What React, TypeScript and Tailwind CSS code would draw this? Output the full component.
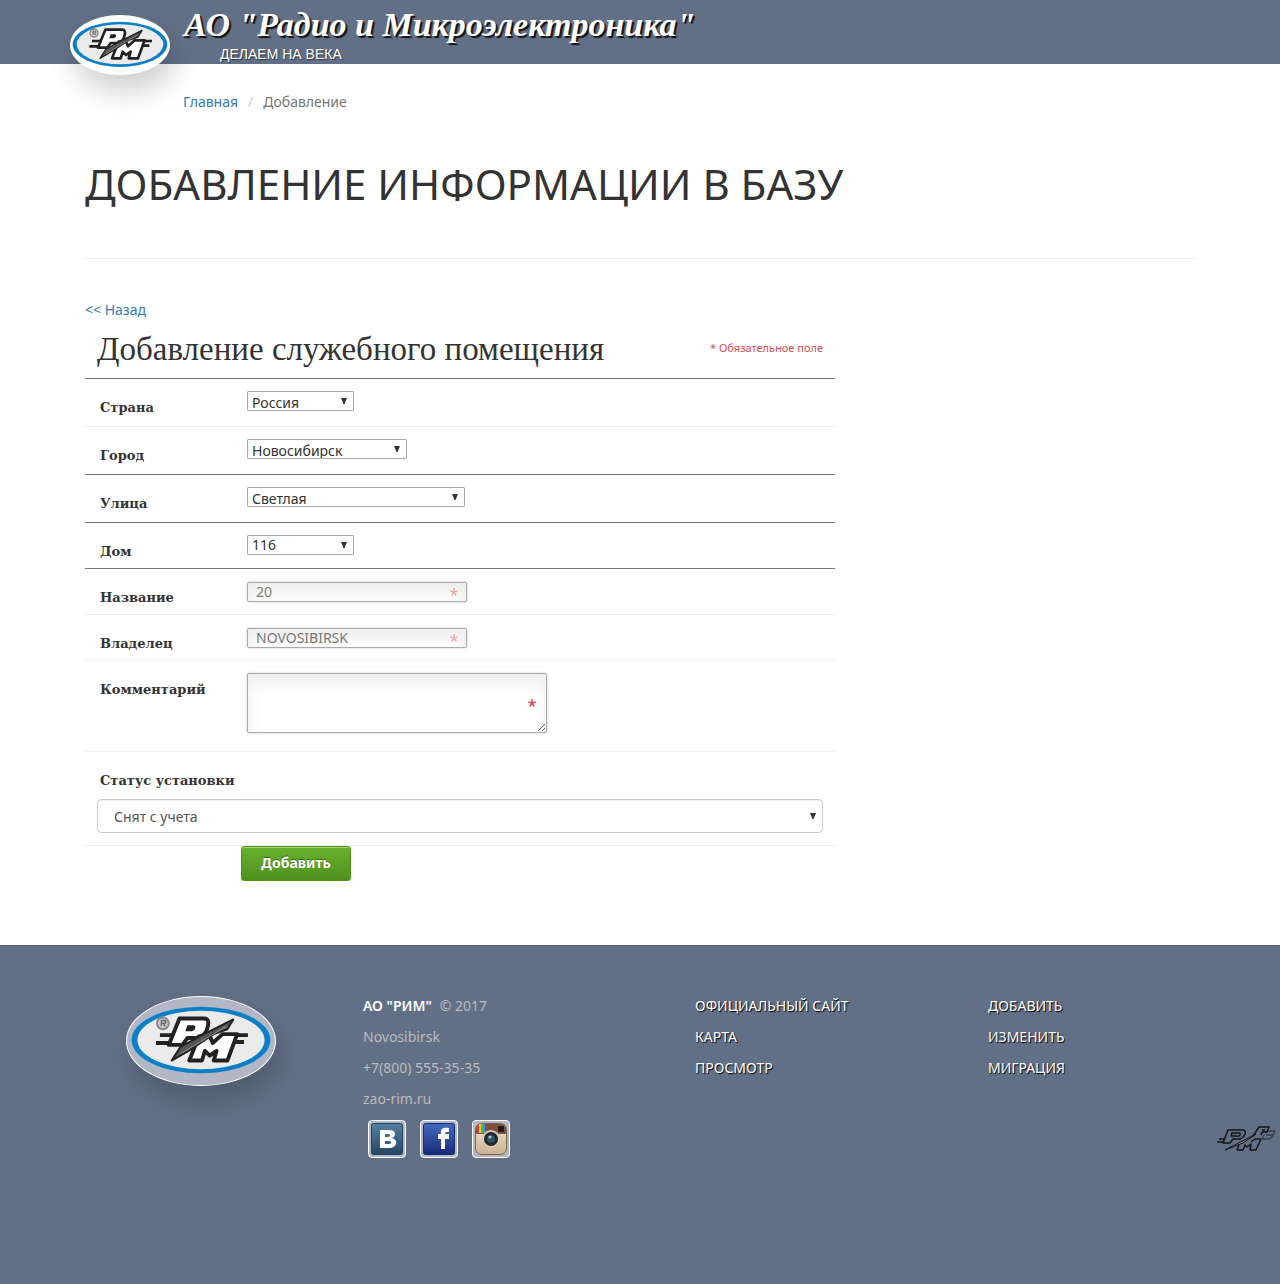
import type { ReactNode } from 'react';

const Emblem = ({ className }: { className: string }) => (
  <svg viewBox="0 0 150 90" className={className} role="img" aria-label="РиМ">
    <ellipse cx="75" cy="44" rx="71" ry="34" fill="#0d7fc6" />
    <ellipse cx="75" cy="44" rx="65" ry="30" fill="#ebebeb" />
    <circle cx="36" cy="27" r="6" fill="#ccc" stroke="#888" strokeWidth="2" />
    <path d="M34.500 30v-6h2q2.500 0 2.500 1.500T36.500 27h-2m2 0l2 3" stroke="#666" strokeWidth="1.4" fill="none" />
    <g strokeLinejoin="round">
      <path d="M33 39h12M29 47h14M108 39h15M106 46h13" stroke="#222" strokeWidth="4" fill="none" />
      <path d="M53 22H78Q84 22 82 30Q80 41 70 42H61L56 49H42Z" fill="#fff" stroke="#222" strokeWidth="4" />
      <path d="M61 29h6q3 0 2 3q-1 3-4 3h-6Z" fill="#222" />
      <path d="M73 40H84L87 47L97 38H112L102 65H88L91 55L84 60L79 55L76 65H63Z" fill="#fff" stroke="#222" strokeWidth="4" />
      <path d="M108 23L102 33L88 38L64 54L45 65L54 51L78 38Z" fill="#555" stroke="#222" strokeWidth="2" />
      <path d="M101 30L54 58" stroke="#999" strokeWidth="1" />
    </g>
  </svg>
);

const CornerMark = () => (
  <svg viewBox="0 0 60 28" className="h-7 w-[60px]" role="img" aria-label="РиМ">
    <g fill="none" stroke="#151515" strokeWidth="1.5" strokeLinejoin="round">
      <path d="M3 14H8M1 17H7M12 5H27Q30 5 29 9Q27 14 22 14H17L14 18H7Z" />
      <path d="M16 8h7q2 0 1 2t-4 1h-5Z" />
      <path d="M24 17L21 25H27L29 20L31 22L35 19L34 25H40L45 14H39L35 17" />
      <path d="M37 11L43 2H53L51 7H46L45 10M46 5h3" />
      <path d="M52 6H59L57 10H50M50 10H57L54 14H46L48 10" stroke="#3a3f48" />
      <path d="M9 25L40 9L27 18Z" fill="#888" strokeWidth="1" />
    </g>
  </svg>
);

const Arrow = ({ className }: { className: string }) => (
  <svg viewBox="0 0 6 6" className={`pointer-events-none absolute size-1.5 ${className}`} aria-hidden="true">
    <path d="M0 0H6L3.500 6H2.500Z" fill="#333" />
  </svg>
);

const Star = ({ className }: { className: string }) => (
  <svg viewBox="0 0 8 8" className={`pointer-events-none absolute size-2 ${className}`} aria-hidden="true">
    <path d="M4 0V4M4 4L0.300 3M4 4L7.700 3M4 4L1.800 7.500M4 4L6.200 7.500" stroke="#e0474c" strokeWidth="1.500" />
  </svg>
);

type RowProps = { id: string; label: string; height: string; line: string; children: ReactNode };
const Row = ({ id, label, height, line, children }: RowProps) => (
  <div className={`flex items-start border-b pt-3 ${height} ${line}`}>
    <label htmlFor={id} className="w-[162px] shrink-0 pt-[7px] pl-[15px] font-['DejaVu_Serif',serif] text-[13px] leading-5 font-bold">
      {label}
    </label>
    {children}
  </div>
);

const DARK = 'border-[#777]';
const LIGHT = 'border-[#eee]';

type PickProps = { id: string; value: string; width: string; pad: string };
const Pick = ({ id, value, width, pad }: PickProps) => (
  <div className={`relative ${width}`}>
    <select id={id} className={`block h-5 w-full appearance-none overflow-hidden rounded-[1px] border border-[#a9a9a9] bg-white pl-1 text-sm leading-[18px] ${pad}`}>
      <option>{value}</option>
    </select>
    <Arrow className="top-[7px] right-[7px]" />
  </div>
);

const Locked = ({ id, value }: { id: string; value: string }) => (
  <div className="relative mt-px w-[220px]">
    <input
      id={id}
      disabled
      defaultValue={value}
      className="block h-5 w-full rounded-[2px] border border-[#aaa] bg-white px-2 pb-0.5 text-sm leading-4 text-[#777] shadow-[0_0_3px_#ccc,inset_0_10px_15px_#eee]"
    />
    <Star className="top-1.5 right-[9px] opacity-40" />
  </div>
);

const picks = [
  { id: 'country', label: 'Страна', value: 'Россия', width: 'w-[107px]', pad: 'pt-0.5', height: 'h-12', line: LIGHT },
  { id: 'city', label: 'Город', value: 'Новосибирск', width: 'w-40', pad: 'pt-0.5', height: 'h-12', line: DARK },
  { id: 'street', label: 'Улица', value: 'Светлая', width: 'w-[218px]', pad: 'pt-0.5', height: 'h-12', line: DARK },
  { id: 'house', label: 'Дом', value: '116', width: 'w-[107px]', pad: 'pt-0', height: 'h-[46px]', line: DARK },
];

const Social = ({ label, children }: { label: string; children: ReactNode }) => (
  <a href="#" aria-label={label} className="block size-[38px] rounded border border-white bg-[#b1b7c5] p-0.5">
    <svg viewBox="0 0 32 32" className="size-8" aria-hidden="true">{children}</svg>
  </a>
);

const links = 'text-white [text-shadow:1px_1px_1px_#000]';

export default function App() {
  return (
    <div className="flex min-h-screen flex-col bg-white font-['Noto_Sans',sans-serif] text-sm text-[#333]">
      <header className="h-16 bg-[#627087]">
        <div className="mx-auto flex max-w-[1140px] items-start">
          <a href="#" className="relative mt-[15px] block shrink-0 rounded-[50%] bg-white shadow-[5px_15px_30px_rgba(0,0,0,0.2)]">
            <Emblem className="h-[60px] w-[100px]" />
          </a>
          <div className="pl-3.5 text-white">
            <div className="pt-1 font-['Liberation_Serif',serif] text-[34px] leading-[42px] font-bold whitespace-nowrap italic [text-shadow:2px_2px_1px_#111]">
              АО "Радио и Микроэлектроника"
            </div>
            <div className="pl-9 font-['Liberation_Sans',sans-serif] text-sm leading-4 [text-shadow:1px_1px_1px_#333]">ДЕЛАЕМ НА ВЕКА</div>
          </div>
        </div>
      </header>

      <main className="mx-auto w-full max-w-[1140px] grow px-[15px]">
        <nav className="flex gap-2.5 pt-7 pl-[98px] leading-5">
          <a href="#" className="text-[#337ab7]">Главная</a>
          <span className="text-[#ccc]">/</span>
          <span className="text-[#777]">Добавление</span>
        </nav>
        <h1 className="mt-10 text-[42px] leading-[64px] whitespace-nowrap">ДОБАВЛЕНИЕ ИНФОРМАЦИИ В БАЗУ</h1>
        <hr className="mt-[42px] border-[#eee]" />
        <a href="#" className="mt-[41px] block w-fit leading-5 text-[#337ab7]">&lt;&lt; Назад</a>

        <form className="max-w-[750px]" onSubmit={(e) => e.preventDefault()}>
          <div className="flex h-[59px] items-center justify-between border-b border-[#777] px-3">
            <h2 className="font-['Liberation_Serif',serif] text-[33px] leading-10 whitespace-nowrap">Добавление служебного помещения</h2>
            <span className="pb-0.5 text-[11px] leading-4 text-[#d45252]">* Обязательное поле</span>
          </div>
          {picks.map((p) => (
            <Row key={p.id} id={p.id} label={p.label} height={p.height} line={p.line}>
              <Pick id={p.id} value={p.value} width={p.width} pad={p.pad} />
            </Row>
          ))}
          <Row id="name" label="Название" height="h-[46px]" line={LIGHT}>
            <Locked id="name" value="20" />
          </Row>
          <Row id="owner" label="Владелец" height="h-[46px]" line={LIGHT}>
            <Locked id="owner" value="NOVOSIBIRSK" />
          </Row>
          <Row id="comment" label="Комментарий" height="h-[91px]" line={LIGHT}>
            <div className="relative">
              <textarea
                id="comment"
                className="block h-[60px] w-[300px] rounded-[2px] border border-[#aaa] bg-white px-2 shadow-[0_0_3px_#ccc,inset_0_10px_15px_#eee]"
              />
              <Star className="top-[26px] right-[11px]" />
            </div>
          </Row>
          <div className="h-[94px] border-b border-[#eee] px-3 pt-[19px]">
            <label htmlFor="status" className="block pl-[3px] font-['DejaVu_Serif',serif] text-[13px] leading-5 font-bold">Статус установки</label>
            <div className="relative mt-2">
              <select id="status" className="block h-[34px] w-full appearance-none rounded border border-[#ccc] bg-white px-4 pt-px text-sm text-[#555] shadow-[inset_0_1px_1px_rgba(0,0,0,0.075)]">
                <option>Снят с учета</option>
              </select>
              <Arrow className="top-3.5 right-[7px]" />
            </div>
          </div>
          <button
            type="submit"
            className="ml-39 block h-[35px] w-[110px] rounded-[3px] border border-[#509111] bg-linear-to-b from-[#68b12f] to-[#50911e] pb-0.5 text-sm font-bold text-white shadow-[inset_0_1px_0_#9fd574] [text-shadow:0_-1px_0_#396715]"
          >
            Добавить
          </button>
        </form>
      </main>

      <footer className="relative mt-16 h-[339px] border-t border-[#536078] bg-[#627087] text-[#bbb]">
        <div className="mx-auto grid max-w-[1140px] grid-cols-[278fr_332fr_293fr_207fr] px-[15px] pt-11 leading-[31px]">
          <a href="#" className="mt-1.5 ml-[41px] block h-[90px] w-[150px] overflow-hidden rounded-[50%] border border-white bg-[#b1b7c5] shadow-[5px_15px_30px_rgba(0,0,0,0.2)]">
            <Emblem className="h-[88px] w-[148px]" />
          </a>
          <div>
            <p><a href="#" className="mr-2 font-semibold text-white">АО "РИМ"</a>© 2017</p>
            <p>Novosibirsk</p>
            <p>+7(800) 555-35-35</p>
            <p>zao-rim.ru</p>
            <div className="mt-1.5 flex gap-3.5 pl-[5px]">
              <Social label="ВКонтакте">
                <defs>
                  <linearGradient id="vk" x2="0" y2="1"><stop stopColor="#55809f" /><stop offset="1" stopColor="#244563" /></linearGradient>
                  <linearGradient id="fb" x2="0" y2="1"><stop stopColor="#4569bd" /><stop offset="1" stopColor="#182a76" /></linearGradient>
                  <linearGradient id="ig" x2="0" y2="1"><stop stopColor="#f3e6d2" /><stop offset="1" stopColor="#cbb091" /></linearGradient>
                </defs>
                <rect x=".5" y=".5" width="31" height="31" rx="2" fill="url(#vk)" stroke="#234460" />
                <path fillRule="evenodd" d="M9 7H18C26 7 25 14 21 15C28 17 26 25 18 25H9ZM14 11V14H17C20 14 20 11 17 11ZM14 18V21H18C21 21 21 18 18 18Z" fill="#fff" />
              </Social>
              <Social label="Facebook">
                <rect x=".5" y=".5" width="31" height="31" rx="2" fill="url(#fb)" stroke="#182b76" />
                <path d="M18 26V16H15V11H18C17 5 21 4 26 5V9C23 9 22 9 22 11H26V16H22V26Z" fill="#fff" />
              </Social>
              <Social label="Instagram">
                <rect x=".5" y=".5" width="31" height="31" rx="6" fill="url(#ig)" stroke="#80624c" />
                <path d="M1 11V6Q1 1 6 1H26Q31 1 31 6V11Z" fill="#80503a" />
                <path d="M3 2V10" stroke="#e33" strokeWidth="2" />
                <path d="M5 1V10" stroke="#fc3" strokeWidth="2" />
                <path d="M7 1V10" stroke="#4b5" strokeWidth="2" />
                <path d="M9 1V10" stroke="#39e" strokeWidth="2" />
                <rect x="23" y="3" width="6" height="6" rx="1" fill="#221c20" />
                <circle cx="16" cy="16" r="9" fill="#d6c9b6" />
                <circle cx="16" cy="16" r="7" fill="#22252b" />
                <circle cx="16" cy="16" r="4" fill="#315164" />
                <circle cx="15" cy="14" r="1.500" fill="#a9cbd8" />
              </Social>
            </div>
          </div>
          <ul>
            <li><a href="#" className={links}>ОФИЦИАЛЬНЫЙ САЙТ</a></li>
            <li><a href="#" className={links}>КАРТА</a></li>
            <li><a href="#" className={links}>ПРОСМОТР</a></li>
          </ul>
          <ul>
            <li><a href="#" className={links}>ДОБАВИТЬ</a></li>
            <li><a href="#" className={links}>ИЗМЕНИТЬ</a></li>
            <li><a href="#" className={links}>МИГРАЦИЯ</a></li>
          </ul>
        </div>
        <a href="#" className="absolute top-[179px] right-1 block"><CornerMark /></a>
      </footer>
    </div>
  );
}
